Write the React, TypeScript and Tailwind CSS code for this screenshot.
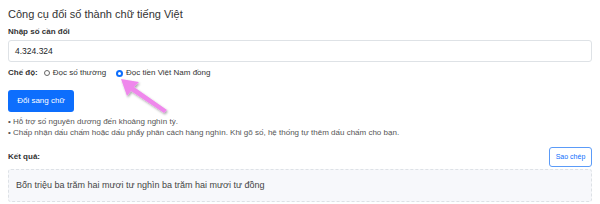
import React from "react";

export default function App() {
  return (
    <div className="relative w-[600px] h-[204px] bg-white overflow-hidden px-[8px] pt-[6px] text-[#212529]" style={{ fontFamily: '"Liberation Sans", Arial, sans-serif' }}>
      <h1 className="text-[11px] leading-[16px] font-normal text-[#333]">Công cụ đổi số thành chữ tiếng Việt</h1>
      <label className="block mt-[4px] text-[8px] leading-[12px] font-bold text-[#333]">Nhập số cần đổi</label>
      <div className="mt-[2px] h-[22px] w-[584px] border border-[#dee2e6] rounded-[3px] flex items-center px-[6px] text-[8.5px]">4.324.324</div>
      <div className="mt-[5px] flex items-center h-[12px] text-[8px] text-[#333]">
        <span className="font-bold mr-[6px]">Chế độ:</span>
        <span className="inline-block w-[6px] h-[6px] rounded-full border border-[#666] mr-[3px]" />
        <span className="mr-[10px]">Đọc số thường</span>
        <span className="inline-flex items-center justify-center w-[7px] h-[7px] rounded-full bg-[#0d6efd] mr-[3px]">
          <span className="w-[3px] h-[3px] rounded-full bg-white" />
        </span>
        <span>Đọc tiền Việt Nam đồng</span>
      </div>
      <div className="mt-[11px] w-[66px] h-[22px] rounded-[3px] bg-[#0d6efd] text-white text-[8px] flex items-center justify-center">Đổi sang chữ</div>
      <div className="mt-[4px] text-[8px] leading-[11px] text-[#555]">
        <div>• Hỗ trợ số nguyên dương đến khoảng nghìn tỷ.</div>
        <div>• Chấp nhận dấu chấm hoặc dấu phẩy phân cách hàng nghìn. Khi gõ số, hệ thống tự thêm dấu chấm cho bạn.</div>
      </div>
      <div className="mt-[9px] flex items-center justify-between w-[584px]">
        <span className="text-[8px] font-bold text-[#333]">Kết quả:</span>
        <span className="w-[43px] h-[20px] border border-[#5b9bf8] rounded-[3px] text-[#0d6efd] text-[7px] flex items-center justify-center">Sao chép</span>
      </div>
      <div className="mt-[2px] w-[584px] h-[33px] border border-dashed border-[#dde1e6] rounded-[3px] bg-[#f7f8fb] flex items-center px-[7px] text-[9px] text-[#444]">Bốn triệu ba trăm hai mươi tư nghìn ba trăm hai mươi tư đồng</div>
      <svg className="absolute left-0 top-0 pointer-events-none" width="600" height="204">
        <defs>
          <filter id="sh" x="-20%" y="-20%" width="140%" height="140%">
            <feDropShadow dx="1" dy="1.5" stdDeviation="1" floodColor="#000" floodOpacity="0.35" />
          </filter>
        </defs>
        <polygon points="121,79 139,82 134,87 167,110 164,113 131,91 127,96" fill="#ef88ec" filter="url(#sh)" />
      </svg>
    </div>
  );
}
